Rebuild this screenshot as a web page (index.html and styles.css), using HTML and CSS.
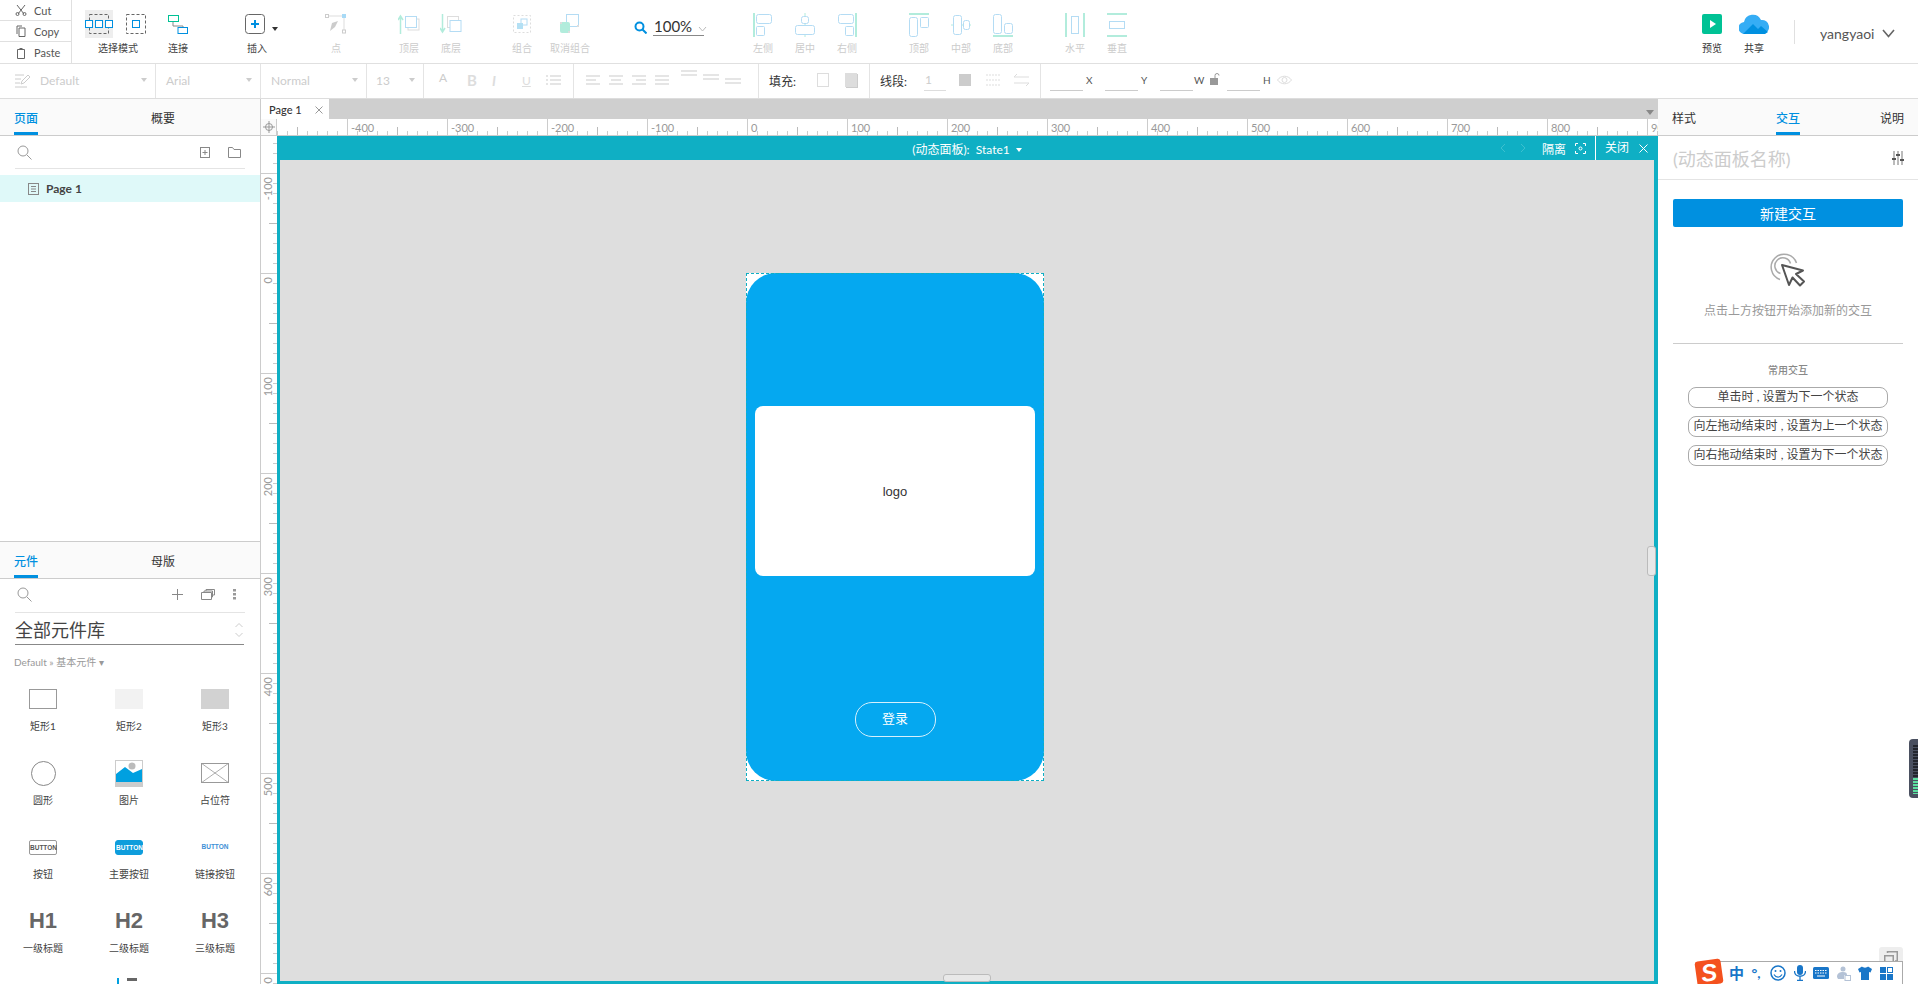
FILE: index.html
```html
<!DOCTYPE html>
<html lang="zh-CN">
<head>
    <meta charset="UTF-8">
    <title>Axure RP</title>
    <link rel="stylesheet" href="styles.css">
</head>
<body>
<div class="app">
    <!-- Top toolbar -->
    <header class="toolbar">
        <div class="clipboard">
            <div class="clip-row"><svg width="12" height="12" viewBox="0 0 12 12"><path d="M2 1l7 9M10 1l-7 9" fill="none" stroke="#666"/><circle cx="2.5" cy="10" r="1.5" fill="none" stroke="#666"/><circle cx="9.5" cy="10" r="1.5" fill="none" stroke="#666"/></svg>Cut</div>
            <div class="clip-row"><svg width="12" height="12" viewBox="0 0 12 12"><path d="M4 3h6v8.500H4zM2 9V1h5" fill="none" stroke="#666"/></svg>Copy</div>
            <div class="clip-row"><svg width="12" height="12" viewBox="0 0 12 12"><path d="M2.500 2.500h7v9h-7z" fill="none" stroke="#666"/><path d="M4.500 1h3v2h-3z" fill="#666"/></svg>Paste</div>
        </div>

        <div class="tool tool-select">
            <div class="select-icons">
                <div class="select-active">
                    <svg width="28" height="28" viewBox="0 0 28 28"><rect x="4.500" y="4.500" width="19" height="19" fill="none" stroke="#666" stroke-dasharray="3 2"/><g fill="#fff" stroke="#0090e0"><rect x="0.500" y="10.500" width="7" height="7"/><rect x="10.500" y="10.500" width="7" height="7"/><rect x="20.500" y="10.500" width="7" height="7"/></g></svg>
                </div>
                <svg width="20" height="20" viewBox="0 0 20 20"><rect x="0.500" y="0.500" width="19" height="19" fill="none" stroke="#666" stroke-dasharray="3 2"/><rect x="6.500" y="6.500" width="7" height="7" fill="#fff" stroke="#0090e0"/></svg>
            </div>
            <span class="tool-label">选择模式</span>
        </div>
        <div class="tool tool-connect">
            <svg width="20" height="20" viewBox="0 0 20 20"><path d="M5 7v5h10v3" fill="none" stroke="#888"/><rect x="0.500" y="1.500" width="10" height="6" fill="#fff" stroke="#00c295"/><rect x="10" y="13.500" width="9.500" height="6" fill="#fff" stroke="#0090e0"/></svg>
            <span class="tool-label">连接</span>
        </div>
        <div class="tool tool-insert">
            <div class="insert-icon">
                <svg width="20" height="20" viewBox="0 0 20 20"><rect x="0.500" y="0.500" width="19" height="19" rx="3" fill="#fff" stroke="#666"/><path d="M10 6v8M6 10h8" stroke="#0090e0" stroke-width="2"/></svg>
                <i class="caret-dark"></i>
            </div>
            <span class="tool-label">插入</span>
        </div>
        <div class="tool tool-point off">
            <svg width="22" height="20" viewBox="0 0 22 20"><path d="M3 2h16v15" fill="none" stroke="#ddd"/><rect x="0.500" y="0.500" width="3" height="3" fill="#fff" stroke="#ccc"/><rect x="17" y="0" width="4" height="4" fill="#a8daf6"/><rect x="17.500" y="16" width="3" height="3" fill="#fff" stroke="#ccc"/><path d="M5 17l2-8 6-2-3 6z" fill="#ccc"/></svg>
            <span class="tool-label">点</span>
        </div>

        <div class="group group-order">
            <div class="tool off">
                <svg width="22" height="20" viewBox="0 0 22 20"><path d="M2.500 20V3M0 6l2.500-4L5 6" fill="none" stroke="#b2ecdc" stroke-width="1.500"/><rect x="10" y="5" width="11" height="11" fill="none" stroke="#ddd"/><rect x="7.500" y="2.500" width="11" height="11" fill="#fff" stroke="#b4dcf4"/></svg>
                <span class="tool-label">顶层</span>
            </div>
            <div class="tool off">
                <svg width="22" height="20" viewBox="0 0 22 20"><path d="M2.500 0v17M0 14l2.500 4L5 14" fill="none" stroke="#b2ecdc" stroke-width="1.500"/><rect x="7.500" y="2.500" width="11" height="11" fill="none" stroke="#ddd"/><rect x="10" y="6.500" width="11" height="11" fill="#fff" stroke="#b4dcf4"/></svg>
                <span class="tool-label">底层</span>
            </div>
        </div>
        <div class="group group-combine">
            <div class="tool off">
                <svg width="20" height="20" viewBox="0 0 20 20"><rect x="1.500" y="1.500" width="17" height="17" fill="none" stroke="#ddd" stroke-dasharray="2 2"/><rect x="9" y="5" width="6" height="6" fill="#fff" stroke="#b4dcf4"/><rect x="5" y="9" width="6" height="6" fill="#b4e0f4"/></svg>
                <span class="tool-label">组合</span>
            </div>
            <div class="tool off tool-wide">
                <svg width="20" height="20" viewBox="0 0 20 20"><rect x="6.500" y="0.500" width="12" height="12" fill="#fff" stroke="#b4dcf4"/><rect x="0" y="8" width="10" height="11" rx="2" fill="#b2ecdc"/><path d="M0 8h2v2H0zM17 11h2v2h-2zM8 17h2v2H8z" fill="#ddd"/></svg>
                <span class="tool-label">取消组合</span>
            </div>
        </div>

        <div class="zoom-box">
            <svg width="13" height="13" viewBox="0 0 13 13"><circle cx="5.500" cy="5.500" r="4" fill="none" stroke="#0090e0" stroke-width="2"/><path d="M8.500 8.500l4 4" stroke="#0090e0" stroke-width="2"/></svg>
            <div class="zoom-value">100%<svg width="9" height="6" viewBox="0 0 9 6"><path d="M1 1l3.500 4L8 1" fill="none" stroke="#bbb"/></svg></div>
        </div>

        <div class="group group-align">
            <div class="tool off">
                <svg width="20" height="24" viewBox="0 0 20 24"><path d="M1 0v24" stroke="#b2ecdc" stroke-width="2"/><rect x="3.500" y="1.500" width="15" height="9" rx="2" fill="none" stroke="#b4dcf4"/><rect x="3.500" y="13.500" width="8" height="9" rx="1" fill="none" stroke="#b4dcf4"/></svg>
                <span class="tool-label">左侧</span>
            </div>
            <div class="tool off">
                <svg width="20" height="24" viewBox="0 0 20 24"><path d="M10 0v24" stroke="#b2ecdc"/><rect x="0.500" y="12.500" width="19" height="9" rx="2" fill="#fff" stroke="#b4dcf4"/><rect x="6.500" y="3.500" width="7" height="7" rx="2" fill="#fff" stroke="#b4dcf4"/></svg>
                <span class="tool-label">居中</span>
            </div>
            <div class="tool off">
                <svg width="20" height="24" viewBox="0 0 20 24"><path d="M19 0v24" stroke="#b2ecdc" stroke-width="2"/><rect x="1.500" y="1.500" width="15" height="9" rx="2" fill="none" stroke="#b4dcf4"/><rect x="8.500" y="13.500" width="8" height="9" rx="1" fill="none" stroke="#b4dcf4"/></svg>
                <span class="tool-label">右侧</span>
            </div>
        </div>
        <div class="group group-valign">
            <div class="tool off">
                <svg width="20" height="24" viewBox="0 0 20 24"><path d="M0 1h20" stroke="#b2ecdc" stroke-width="2"/><rect x="0.500" y="4.500" width="8" height="19" rx="2" fill="none" stroke="#b4dcf4"/><rect x="11.500" y="4.500" width="8" height="10" rx="1" fill="none" stroke="#b4dcf4"/></svg>
                <span class="tool-label">顶部</span>
            </div>
            <div class="tool off">
                <svg width="20" height="24" viewBox="0 0 20 24"><path d="M0 12h20" stroke="#b2ecdc"/><rect x="2.500" y="2.500" width="8" height="19" rx="2" fill="#fff" stroke="#b4dcf4"/><rect x="12.500" y="7.500" width="6" height="9" rx="2" fill="#fff" stroke="#b4dcf4"/></svg>
                <span class="tool-label">中部</span>
            </div>
            <div class="tool off">
                <svg width="20" height="24" viewBox="0 0 20 24"><path d="M0 23h20" stroke="#b2ecdc" stroke-width="2"/><rect x="0.500" y="1.500" width="8" height="19" rx="2" fill="none" stroke="#b4dcf4"/><rect x="11.500" y="10.500" width="8" height="10" rx="2" fill="none" stroke="#b4dcf4"/></svg>
                <span class="tool-label">底部</span>
            </div>
        </div>
        <div class="group group-spread">
            <div class="tool off">
                <svg width="20" height="24" viewBox="0 0 20 24"><path d="M1 0v24M19 0v24" stroke="#b2ecdc" stroke-width="2"/><rect x="6.500" y="3.500" width="7" height="17" fill="none" stroke="#b4dcf4"/></svg>
                <span class="tool-label">水平</span>
            </div>
            <div class="tool off">
                <svg width="20" height="24" viewBox="0 0 20 24"><path d="M0 1h20M0 23h20" stroke="#b2ecdc" stroke-width="2"/><rect x="2.500" y="8.500" width="15" height="7" fill="none" stroke="#b4dcf4"/></svg>
                <span class="tool-label">垂直</span>
            </div>
        </div>

        <div class="group group-right">
            <div class="tool tool-share">
                <svg width="20" height="20" viewBox="0 0 20 20"><rect width="20" height="20" rx="2" fill="#00c295"/><path d="M8 6l6 4-6 4z" fill="#fff"/></svg>
                <span class="tool-label">预览</span>
            </div>
            <div class="tool tool-share">
                <svg width="30" height="20" viewBox="0 0 30 20"><path d="M6 20a6 6 0 0 1-1-12 9 9 0 0 1 17-2 7 7 0 0 1 2 14z" fill="#35adf5"/><path d="M4 20l10-10 5 5 3-3 7 6-3 2z" fill="#0090e0"/></svg>
                <span class="tool-label">共享</span>
            </div>
            <div class="tool-sep"></div>
            <div class="user">yangyaoi<svg width="13" height="9" viewBox="0 0 13 9"><path d="M1 1l5.500 6.500L12 1" fill="none" stroke="#666" stroke-width="1.600"/></svg></div>
        </div>
    </header>

    <!-- Format bar -->
    <div class="formatbar">
        <div class="fmt-cell fmt-style">
            <svg width="15" height="15" viewBox="0 0 15 15"><path d="M0 2h9M0 6h6M0 10h5M0 14h12M6 11l1-3 6-6 2 2-6 6z" fill="none" stroke="#ccc"/></svg>
            <span>Default</span><i class="caret-faint"></i>
        </div>
        <div class="fmt-cell fmt-font"><span>Arial</span><i class="caret-faint"></i></div>
        <div class="fmt-cell fmt-font"><span>Normal</span><i class="caret-faint"></i></div>
        <div class="fmt-cell fmt-size"><span>13</span><i class="caret-faint"></i></div>
        <div class="fmt-cell fmt-text">
            <span class="fmt-a">A</span><b class="fmt-b">B</b><i class="fmt-i">I</i><u class="fmt-u">U</u>
            <svg width="15" height="10" viewBox="0 0 15 10"><path d="M0 1h2M4 1h11M0 5h2M4 5h11M0 9h2M4 9h11" stroke="#ddd" stroke-width="1.500"/></svg>
        </div>
        <div class="fmt-cell fmt-align">
            <svg width="14" height="10" viewBox="0 0 14 10"><path d="M0 1h14M0 5h10M0 9h14" stroke="#ddd" stroke-width="1.500"/></svg>
            <svg width="14" height="10" viewBox="0 0 14 10"><path d="M0 1h14M2 5h10M0 9h14" stroke="#ddd" stroke-width="1.500"/></svg>
            <svg width="14" height="10" viewBox="0 0 14 10"><path d="M0 1h14M4 5h10M0 9h14" stroke="#ddd" stroke-width="1.500"/></svg>
            <svg width="14" height="10" viewBox="0 0 14 10"><path d="M0 1h14M0 5h14M0 9h14" stroke="#ddd" stroke-width="1.500"/></svg>
            <div class="valign-set">
                <svg class="va-top" width="16" height="6" viewBox="0 0 16 6"><path d="M0 1h16M0 5h16" stroke="#ddd" stroke-width="1.500"/></svg>
                <svg class="va-mid" width="16" height="6" viewBox="0 0 16 6"><path d="M0 1h16M0 5h16" stroke="#ddd" stroke-width="1.500"/></svg>
                <svg class="va-bot" width="16" height="6" viewBox="0 0 16 6"><path d="M0 1h16M0 5h16" stroke="#ddd" stroke-width="1.500"/></svg>
            </div>
        </div>
        <div class="fmt-cell fmt-fill">
            <span class="fmt-title">填充:</span>
            <span class="swatch-empty"></span>
            <span class="swatch-shadow"></span>
        </div>
        <div class="fmt-cell fmt-line">
            <span class="fmt-title">线段:</span>
            <span class="line-width">1</span>
            <span class="swatch-line"></span>
            <svg width="15" height="12" viewBox="0 0 15 12"><path d="M0 1h15M0 6h15M0 11h15" stroke="#ddd" stroke-dasharray="2 1"/></svg>
            <svg width="15" height="14" viewBox="0 0 15 14"><path d="M3 1L0 4h15M12 13l3-3H0" fill="none" stroke="#ddd"/></svg>
        </div>
        <div class="fmt-cell fmt-geom">
            <span class="geo-field"></span><span class="geo-label">X</span>
            <span class="geo-field"></span><span class="geo-label">Y</span>
            <span class="geo-field"></span><span class="geo-label">W</span>
            <svg class="geo-lock" width="10" height="12" viewBox="0 0 10 12"><path d="M5 5V2.500a2 2 0 0 1 4 0" fill="none" stroke="#999"/><rect y="5" width="8" height="7" fill="#999"/></svg>
            <span class="geo-field"></span><span class="geo-label">H</span>
            <svg class="geo-eye" width="15" height="10" viewBox="0 0 15 10"><path d="M0.500 5C4 0 11 0 14.500 5 11 10 4 10 0.500 5z" fill="none" stroke="#ddd"/><circle cx="7.500" cy="5" r="2.500" fill="none" stroke="#ddd"/></svg>
        </div>
    </div>

    <div class="main">
        <!-- Left panels -->
        <aside class="left">
            <section class="pages">
                <div class="tabs">
                    <span class="tab active">页面</span>
                    <span class="tab tab-second">概要</span>
                </div>
                <div class="search-row">
                    <svg width="15" height="15" viewBox="0 0 15 15"><circle cx="6" cy="6" r="5" fill="none" stroke="#999"/><path d="M10 10l4.500 4.500" stroke="#999"/></svg>
                    <svg class="page-add" width="10" height="11" viewBox="0 0 10 11"><rect x="0.500" y="0.500" width="9" height="10" fill="none" stroke="#888"/><path d="M5 3v5M2.500 5.500h5" stroke="#888"/></svg>
                    <svg class="page-folder" width="13" height="11" viewBox="0 0 13 11"><path d="M0.500 0.500h4l1.500 2h6.500v8h-12z" fill="none" stroke="#888"/></svg>
                </div>
                <div class="page-row">
                    <svg width="11" height="12" viewBox="0 0 11 12"><rect x="0.500" y="0.500" width="10" height="11" fill="none" stroke="#888"/><path d="M3 3.500h5M3 6h5M3 8.500h5" stroke="#888"/></svg>
                    <span>Page 1</span>
                </div>
            </section>
            <section class="widgets">
                <div class="tabs">
                    <span class="tab active">元件</span>
                    <span class="tab tab-second">母版</span>
                </div>
                <div class="search-row search-row-lib">
                    <svg width="15" height="15" viewBox="0 0 15 15"><circle cx="6" cy="6" r="5" fill="none" stroke="#999"/><path d="M10 10l4.500 4.500" stroke="#999"/></svg>
                    <svg class="lib-add" width="11" height="11" viewBox="0 0 11 11"><path d="M5.500 0v11M0 5.500h11" stroke="#888"/></svg>
                    <svg class="lib-copy" width="14" height="11" viewBox="0 0 14 11"><path d="M0.500 3.500h10v7h-10zM3 3.500V2h8.500v6H10.500M5 2V0.500h8.500V6H11.500" fill="none" stroke="#888"/></svg>
                    <svg class="lib-more" width="3" height="11" viewBox="0 0 3 11"><path d="M0 0h3v2.500H0zM0 4h3v2.500H0zM0 8h3v2.500H0z" fill="#999"/></svg>
                </div>
                <div class="lib-name">
                    <span>全部元件库</span>
                    <svg width="8" height="14" viewBox="0 0 8 14"><path d="M0.500 4L4 0.500 7.500 4M0.500 10L4 13.500 7.500 10" fill="none" stroke="#ccc"/></svg>
                </div>
                <div class="lib-path">Default » 基本元件 ▾</div>
                <div class="widget-grid">
                    <div class="widget"><div class="w-icon"><span class="w-rect"></span></div><span>矩形1</span></div>
                    <div class="widget"><div class="w-icon"><span class="w-rect w-rect2"></span></div><span>矩形2</span></div>
                    <div class="widget"><div class="w-icon"><span class="w-rect w-rect3"></span></div><span>矩形3</span></div>

                    <div class="widget"><div class="w-icon"><span class="w-circle"></span></div><span>圆形</span></div>
                    <div class="widget"><div class="w-icon">
                        <svg width="28" height="27" viewBox="0 0 28 27"><rect x="0.500" y="0.500" width="27" height="26" fill="#fff" stroke="#ccc"/><path d="M1 14l9-7 8 6 9-4v13H1z" fill="#00a0e0"/><rect y="22" width="28" height="5" fill="#ccc"/><circle cx="17" cy="6" r="3.500" fill="#bbb"/></svg>
                    </div><span>图片</span></div>
                    <div class="widget"><div class="w-icon">
                        <svg width="28" height="20" viewBox="0 0 28 20"><rect x="0.500" y="0.500" width="27" height="19" fill="#fff" stroke="#999"/><path d="M0 0l28 20M28 0L0 20" stroke="#999" stroke-width="0.800"/></svg>
                    </div><span>占位符</span></div>

                    <div class="widget"><div class="w-icon"><span class="w-btn">BUTTON</span></div><span>按钮</span></div>
                    <div class="widget"><div class="w-icon"><span class="w-btn w-btn-primary">BUTTON</span></div><span>主要按钮</span></div>
                    <div class="widget"><div class="w-icon"><span class="w-btn w-btn-link">BUTTON</span></div><span>链接按钮</span></div>

                    <div class="widget"><div class="w-icon"><b class="w-h">H1</b></div><span>一级标题</span></div>
                    <div class="widget"><div class="w-icon"><b class="w-h">H2</b></div><span>二级标题</span></div>
                    <div class="widget"><div class="w-icon"><b class="w-h">H3</b></div><span>三级标题</span></div>

                    <div class="widget"></div>
                    <div class="widget"><div class="w-icon w-icon-cut">
                        <svg width="24" height="12" viewBox="0 0 24 12"><rect x="0" y="0" width="2" height="6" fill="#00a0e0"/><rect x="10" y="0" width="10" height="3" fill="#666"/></svg>
                    </div></div>
                </div>
            </section>
        </aside>

        <!-- Canvas -->
        <div class="center">
            <div class="page-tabs">
                <div class="page-tab">Page 1<svg width="8" height="8" viewBox="0 0 8 8"><path d="M0.500 0.500l7 7M7.500 0.500l-7 7" stroke="#999"/></svg></div>
                <i class="tabs-menu"></i>
            </div>
            <div class="ruler-row">
                <div class="ruler-corner"><svg width="12" height="12" viewBox="0 0 12 12"><circle cx="6" cy="6" r="3.500" fill="none" stroke="#999"/><path d="M6 0v12M0 6h12" stroke="#999"/></svg></div>
                <div class="hruler">
                    <span class="hcell hcell-first"></span>
                    <span class="hcell">-400</span><span class="hcell">-300</span><span class="hcell">-200</span><span class="hcell">-100</span>
                    <span class="hcell">0</span><span class="hcell">100</span><span class="hcell">200</span><span class="hcell">300</span>
                    <span class="hcell">400</span><span class="hcell">500</span><span class="hcell">600</span><span class="hcell">700</span>
                    <span class="hcell">800</span><span class="hcell">900</span>
                </div>
            </div>
            <div class="work">
                <div class="vruler">
                    <span class="vcell vcell-first"></span>
                    <span class="vcell"><em>-100</em></span><span class="vcell"><em>0</em></span><span class="vcell"><em>100</em></span>
                    <span class="vcell"><em>200</em></span><span class="vcell"><em>300</em></span><span class="vcell"><em>400</em></span>
                    <span class="vcell"><em>500</em></span><span class="vcell"><em>600</em></span><span class="vcell"><em>700</em></span>
                </div>
                <div class="panel-edit">
                    <div class="panel-head">
                        <div class="panel-title">(动态面板): &nbsp;State1 <i class="caret-white"></i></div>
                        <div class="panel-actions">
                            <svg class="nav-arrow" width="6" height="10" viewBox="0 0 6 10"><path d="M5 1L1 5l4 4" fill="none" stroke="#3cc0cf"/></svg>
                            <svg class="nav-arrow" width="6" height="10" viewBox="0 0 6 10"><path d="M1 1l4 4-4 4" fill="none" stroke="#3cc0cf"/></svg>
                            <span class="act-isolate">隔离</span>
                            <svg class="act-icon" width="11" height="11" viewBox="0 0 11 11"><path d="M0.500 3V0.500H3M8 0.500h2.500V3M10.500 8v2.500H8M3 10.500H0.500V8" fill="none" stroke="#fff"/><circle cx="5.500" cy="5.500" r="1.500" fill="none" stroke="#fff"/></svg>
                            <span class="act-close">关闭</span>
                            <svg class="act-x" width="9" height="9" viewBox="0 0 9 9"><path d="M0.500 0.500l8 8M8.500 0.500l-8 8" stroke="#fff"/></svg>
                        </div>
                    </div>
                    <div class="canvas">
                        <div class="phone-frame">
                            <div class="phone">
                                <div class="logo-card">logo</div>
                                <div class="login-btn">登录</div>
                            </div>
                        </div>
                        <span class="handle-right"></span>
                        <span class="handle-bottom"></span>
                    </div>
                </div>
            </div>
        </div>

        <!-- Right panel -->
        <aside class="right">
            <div class="right-tabs">
                <span class="tab">样式</span>
                <span class="tab active">交互</span>
                <span class="tab">说明</span>
            </div>
            <div class="panel-name">
                <span>(动态面板名称)</span>
                <svg width="12" height="14" viewBox="0 0 12 14"><path d="M2 0v14M6 0v14M10 0v14" stroke="#777"/><path d="M0 8h4M4 4h4M8 9h4" stroke="#555" stroke-width="2"/></svg>
            </div>
            <div class="interact">
                <button class="new-btn">新建交互</button>
                <svg class="cursor-art" width="38" height="38" viewBox="0 0 38 38"><path d="M11 27.500A13 13 0 1 1 27.500 11" fill="none" stroke="#aaa" stroke-width="1.500"/><path d="M11.500 21.500A8 8 0 1 1 21.500 11.500" fill="none" stroke="#aaa" stroke-width="1.500"/><path d="M13 13l7 20 3.500-7.500 7.500 8 4-4-8-7.500 7-3.500z" fill="#fff" stroke="#555" stroke-width="2" stroke-linejoin="round"/></svg>
                <p class="hint">点击上方按钮开始添加新的交互</p>
                <div class="interact-line"></div>
                <h4>常用交互</h4>
                <div class="pill">单击时 , 设置为下一个状态</div>
                <div class="pill">向左拖动结束时 , 设置为上一个状态</div>
                <div class="pill">向右拖动结束时 , 设置为下一个状态</div>
            </div>
        </aside>
    </div>
</div>

<!-- Desktop overlays -->
<div class="volume"></div>
<div class="win-btn"><svg width="14" height="14" viewBox="0 0 14 14"><rect x="0.750" y="4.750" width="8.500" height="8.500" fill="none" stroke="#999" stroke-width="1.500"/><path d="M3.500 2V0.750h9.750V10H11" fill="none" stroke="#999" stroke-width="1.500"/></svg></div>
<div class="ime">
    <span class="ime-logo">S</span>
    <span class="ime-zh">中</span>
    <span class="ime-punc">°,</span>
    <svg width="16" height="16" viewBox="0 0 16 16"><circle cx="8" cy="8" r="7" fill="none" stroke="#1976c8" stroke-width="1.500"/><circle cx="5.500" cy="6" r="1" fill="#1976c8"/><circle cx="10.500" cy="6" r="1" fill="#1976c8"/><path d="M4 9.500c2 3.500 6 3.500 8 0" fill="none" stroke="#1976c8" stroke-width="1.200"/></svg>
    <svg width="12" height="16" viewBox="0 0 12 16"><rect x="3" width="6" height="10" rx="3" fill="#1976c8"/><path d="M0.500 6c0 7 11 7 11 0M6 12v3M3 15.500h6" fill="none" stroke="#1976c8" stroke-width="1.300"/></svg>
    <svg width="16" height="12" viewBox="0 0 16 12"><rect width="16" height="12" rx="1.500" fill="#1976c8"/><path d="M2 3.500h12M2 6h12" stroke="#fff" stroke-dasharray="1.500 1"/><path d="M4 9h8" stroke="#fff"/></svg>
    <svg width="14" height="15" viewBox="0 0 14 15"><circle cx="6" cy="3" r="2.500" fill="#b4c2d6"/><path d="M0 11c0-4 3-5 6-5s4 1 4 3H7v4H1z" fill="#b4c2d6"/><rect x="8" y="9.500" width="5.500" height="5" fill="#fff" stroke="#b4c2d6"/></svg>
    <svg width="14" height="14" viewBox="0 0 14 14"><path d="M4 0.500L0 3l1.500 3.500 1.500-.5V14h8V6l1.500.5L14 3 10 0.500C9 2 5 2 4 0.500z" fill="#1976c8"/></svg>
    <svg width="13" height="13" viewBox="0 0 13 13"><path d="M0 0h6v6H0zM0 7h6v6H0zM7 7h6v6H7z" fill="#1976c8"/><rect x="7.500" y="0.500" width="5" height="5" fill="#fff" stroke="#1976c8"/></svg>
</div>
</body>
</html>
```

FILE: styles.css
```css
* {
    margin: 0;
    padding: 0;
    box-sizing: border-box;
}

body {
    width: 1918px;
    height: 984px;
    overflow: hidden;
    position: relative;
    background-color: #fff;
    color: #333;
    font-family: Lato, "Noto Sans CJK SC", sans-serif;
    font-size: 10px;
}

svg {
    display: block;
    flex: none;
}

.app {
    display: flex;
    flex-direction: column;
    height: 984px;
}

/* Top toolbar */
.toolbar {
    display: flex;
    height: 64px;
    border-bottom: 1px solid #e0e0e0;
    flex: none;
}

.clipboard {
    width: 72px;
    border-right: 1px solid #e0e0e0;
}

.clip-row {
    display: flex;
    align-items: center;
    gap: 7px;
    height: 21px;
    padding-left: 15px;
    border-bottom: 1px solid #e0e0e0;
    color: #555;
    font-size: 11px;
    line-height: 1;
}

.clip-row:last-child {
    border-bottom: 0;
}

.tool {
    position: relative;
    width: 42px;
    display: flex;
    flex-direction: column;
    align-items: center;
    padding-top: 14px;
    flex: none;
}

.tool svg {
    height: 20px;
}

.tool-label {
    position: absolute;
    top: 42px;
    line-height: 12px;
    font-size: 10px;
    white-space: nowrap;
    color: #444;
}

.off .tool-label {
    color: #ccc;
}

.tool-select {
    width: 66px;
    margin-left: 13px;
    padding-top: 10px;
    align-items: flex-start;
}

.tool-select .tool-label {
    left: 13px;
}

.select-icons {
    display: flex;
    align-items: center;
    gap: 13px;
}

.select-active {
    width: 28px;
    height: 28px;
    background-color: #eee;
}

.tool-select svg {
    height: auto;
}

.tool-connect {
    margin-left: 6px;
}

.tool-insert {
    margin-left: 37px;
}

.insert-icon {
    display: flex;
    align-items: flex-end;
    gap: 7px;
    align-self: flex-start;
    margin-left: 9px;
}

.caret-dark {
    width: 0;
    height: 0;
    margin-bottom: 3px;
    border: 3.5px solid transparent;
    border-top: 4px solid #333;
    border-bottom: 0;
}

.tool-insert .tool-label {
    left: 11px;
}

.tool-point {
    margin-left: 37px;
}

.group {
    display: flex;
    flex: none;
}

.group-order {
    margin-left: 31px;
}

.group-combine {
    margin-left: 29px;
}

.tool-wide {
    margin-left: 6px;
}

.zoom-box {
    display: flex;
    align-items: flex-start;
    gap: 6px;
    width: 70px;
    margin-left: 43px;
    padding-top: 21px;
    flex: none;
}

.zoom-value {
    display: flex;
    align-items: center;
    gap: 6px;
    width: 51px;
    height: 18px;
    margin-top: -3px;
    padding-left: 1px;
    border-bottom: 1px solid #888;
    font-size: 15px;
    line-height: 17px;
    color: #333;
}

.zoom-value svg {
    margin-top: 4px;
}

.group-align {
    margin-left: 38px;
}

.group-valign,
.group-spread {
    margin-left: 30px;
}

.group-align .tool,
.group-valign .tool,
.group-spread .tool {
    padding-top: 13px;
}

.group-align .tool svg,
.group-valign .tool svg,
.group-spread .tool svg {
    height: 24px;
}

.group-right {
    margin-left: auto;
    padding-right: 23px;
    position: relative;
}

.tool-share .tool-label {
    color: #333;
}

.tool-sep {
    width: 1px;
    height: 24px;
    margin: 20px 25px 0 19px;
    background-color: #e0e0e0;
}

.user {
    display: flex;
    align-items: center;
    justify-content: space-between;
    width: 75px;
    height: 24px;
    margin-top: 21px;
    font-size: 14px;
    color: #555;
}

/* Format bar */
.formatbar {
    display: flex;
    height: 35px;
    border-bottom: 1px solid #ddd;
    flex: none;
}

.fmt-cell {
    display: flex;
    align-items: center;
    height: 34px;
    padding-bottom: 2px;
    border-right: 1px solid #e4e4e4;
    color: #ccc;
    font-size: 12px;
    flex: none;
}

.fmt-style {
    width: 156px;
    padding-left: 15px;
    gap: 10px;
}

.fmt-font {
    width: 105px;
    padding-left: 10px;
}

.fmt-font + .fmt-font {
    width: 106px;
}

.fmt-size {
    width: 57px;
    padding-left: 9px;
}

.caret-faint {
    width: 0;
    height: 0;
    margin-left: auto;
    margin-right: 8px;
    border: 3.500px solid transparent;
    border-top: 4px solid #ccc;
    border-bottom: 0;
}

.fmt-text {
    width: 150px;
    padding-left: 15px;
}

.fmt-a {
    width: 28px;
    font-size: 12px;
    margin-top: -5px;
}

.fmt-b {
    width: 24px;
    font-size: 15px;
    color: #ddd;
}

.fmt-i {
    width: 31px;
    font-size: 14px;
    color: #ddd;
    font-weight: bold;
    padding-left: 1px;
}

.fmt-u {
    width: 24px;
    font-size: 12px;
    color: #ddd;
    text-decoration: underline;
}

.fmt-align {
    width: 185px;
    padding-left: 12px;
    gap: 9px;
}

.valign-set {
    display: flex;
    gap: 6px;
    height: 20px;
    margin-left: 3px;
}

.va-mid {
    margin-top: 4px;
}

.va-bot {
    margin-top: 8px;
}

.fmt-title {
    width: 30px;
    font-size: 12px;
    color: #333;
    white-space: nowrap;
}

.fmt-fill {
    width: 111px;
    padding-left: 10px;
}

.swatch-empty {
    width: 12px;
    height: 14px;
    margin-left: 18px;
    border: 1px solid #ddd;
}

.swatch-shadow {
    width: 12px;
    height: 14px;
    margin-left: 16px;
    background-color: #ddd;
    box-shadow: 1px 1px 0 #ccc;
}

.fmt-line {
    width: 171px;
    padding-left: 10px;
}

.line-width {
    width: 22px;
    margin-left: 14px;
    height: 20px;
    margin-top: 2px;
    border-bottom: 1px solid #ddd;
    line-height: 17px;
    padding-left: 1px;
}

.swatch-line {
    width: 12px;
    height: 12px;
    margin: 0 15px 0 13px;
    background-color: #ccc;
}

.fmt-line svg:last-child {
    margin-left: 13px;
}

.fmt-geom {
    flex: 1;
    padding-left: 9px;
    border-right: 0;
}

.geo-field {
    width: 33px;
    height: 20px;
    margin-top: 2px;
    border-bottom: 1px solid #ccc;
}

.geo-label {
    width: 22px;
    padding-left: 3px;
    font-size: 10px;
    color: #555;
}

.geo-label:nth-of-type(6) {
    width: 18px;
    padding-left: 1px;
}

.geo-lock {
    margin: -2px 7px 0 -1px;
}

.geo-eye {
    margin-left: -5px;
}

/* Panels */
.main {
    display: flex;
    flex: 1;
    min-height: 0;
}

.left {
    width: 261px;
    border-right: 1px solid #ccc;
    display: flex;
    flex-direction: column;
    flex: none;
}

.pages {
    height: 443px;
    border-bottom: 1px solid #ccc;
    flex: none;
}

.widgets {
    flex: 1;
    overflow: hidden;
}

.tabs {
    display: flex;
    height: 37px;
    padding-left: 14px;
    background-color: #fafafa;
    border-bottom: 1px solid #ccc;
}

.tab {
    height: 36px;
    padding-top: 10px;
    font-size: 12px;
    line-height: 20px;
    color: #333;
}

.tab.active {
    color: #0090e0;
    font-weight: 500;
    border-bottom: 3px solid #0090e0;
}

.tab-second {
    margin-left: 113px;
}

.search-row {
    display: flex;
    align-items: center;
    height: 33px;
    margin: 0 15px;
    padding-left: 2px;
    border-bottom: 1px solid #e4e4e4;
}

.page-add {
    margin-left: auto;
    margin-right: 18px;
}

.page-folder {
    margin-right: 4px;
}

.page-row {
    display: flex;
    align-items: center;
    gap: 7px;
    height: 27px;
    margin-top: 6px;
    padding-left: 28px;
    background-color: #dff9f9;
    font-size: 12px;
    font-weight: bold;
    color: #444;
}

.search-row-lib {
    height: 34px;
    padding-bottom: 2px;
}

.lib-add {
    margin-left: auto;
    margin-right: 18px;
}

.lib-copy {
    margin-right: 18px;
}

.lib-more {
    margin-right: 9px;
}

.lib-name {
    display: flex;
    align-items: center;
    justify-content: space-between;
    height: 32px;
    margin: 0 16px 0 15px;
    padding: 2px 1px 0 0;
    border-bottom: 1px solid #888;
    font-size: 18px;
    line-height: 1;
    color: #444;
}

.lib-path {
    height: 37px;
    padding: 10px 0 0 14px;
    font-size: 10px;
    line-height: 14px;
    color: #999;
}

.widget-grid {
    display: grid;
    grid-template-columns: repeat(3, 86px);
    grid-auto-rows: 74px;
}

.widget {
    display: flex;
    flex-direction: column;
    align-items: center;
    font-size: 10px;
    line-height: 20px;
    color: #444;
}

.w-icon {
    display: flex;
    align-items: center;
    justify-content: center;
    height: 34px;
    flex: none;
}

.w-icon-cut {
    align-items: flex-start;
}

.w-rect {
    width: 28px;
    height: 20px;
    border: 1px solid #999;
}

.w-rect2 {
    background-color: #f2f2f2;
    border: 0;
}

.w-rect3 {
    background-color: #d2d2d2;
    border: 0;
}

.w-circle {
    width: 25px;
    height: 25px;
    border: 1px solid #888;
    border-radius: 50%;
}

.w-btn {
    width: 28px;
    height: 15px;
    border: 1px solid #999;
    border-radius: 2px;
    color: #555;
    font-family: "Liberation Sans", sans-serif;
    font-size: 6.500px;
    font-weight: bold;
    line-height: 13px;
    text-align: center;
}

.w-btn-primary {
    background-color: #0e9ddc;
    border-color: #0e9ddc;
    border-radius: 3px;
    color: #fff;
}

.w-btn-link {
    border: 0;
    color: #3d8fd6;
}

.w-h {
    font-family: "Liberation Sans", sans-serif;
    font-size: 22px;
    line-height: 1;
    color: #666;
}

/* Canvas */
.center {
    width: 1397px;
    display: flex;
    flex-direction: column;
    flex: none;
}

.page-tabs {
    display: flex;
    height: 20px;
    background-color: #cfcfcf;
    position: relative;
    flex: none;
}

.page-tab {
    display: flex;
    align-items: center;
    width: 68px;
    padding-left: 8px;
    gap: 13px;
    background-color: #fff;
    font-size: 11px;
    font-weight: 500;
    color: #333;
}

.page-tab svg {
    margin-top: 2px;
}

.tabs-menu {
    position: absolute;
    right: 4px;
    top: 11px;
    width: 0;
    height: 0;
    border: 4.500px solid transparent;
    border-top: 5px solid #888;
    border-bottom: 0;
}

.ruler-row {
    display: flex;
    height: 17px;
    border-bottom: 1px solid #ccc;
    background-color: #fff;
    flex: none;
}

.ruler-corner {
    display: flex;
    align-items: center;
    justify-content: center;
    width: 16px;
    border-right: 1px solid #ccc;
    background-color: #fafafa;
    flex: none;
}

.hruler {
    display: flex;
    flex: 1;
    overflow: hidden;
}

.hcell {
    width: 100px;
    height: 16px;
    padding-left: 3px;
    flex: none;
    border-left: 1px solid #ccc;
    font-size: 11px;
    line-height: 17px;
    color: #999;
    background-image:
        linear-gradient(#bbb, #bbb),
        repeating-linear-gradient(90deg, transparent 0 9px, #ccc 9px 10px);
    background-size: 1px 8px, 100% 4px;
    background-position: 49px 100%, 0 100%;
    background-repeat: no-repeat;
}

.hcell-first {
    margin-left: -30px;
}

.work {
    display: flex;
    flex: 1;
    min-height: 0;
}

.vruler {
    width: 16px;
    display: flex;
    flex-direction: column;
    overflow: hidden;
    background-color: #fff;
    flex: none;
}

.vcell {
    height: 100px;
    width: 16px;
    flex: none;
    border-top: 1px solid #ccc;
    background-image:
        linear-gradient(#bbb, #bbb),
        repeating-linear-gradient(180deg, transparent 0 9px, #ccc 9px 10px);
    background-size: 8px 1px, 4px 100%;
    background-position: 100% 49px, 100% 0;
    background-repeat: no-repeat;
}

.vcell em {
    display: block;
    font-style: normal;
    font-size: 11px;
    line-height: 14px;
    padding-bottom: 3px;
    color: #999;
    writing-mode: vertical-rl;
    transform: rotate(180deg);
    transform-origin: center;
}

.vcell-first {
    margin-top: -63px;
}

.panel-edit {
    flex: 1;
    display: flex;
    flex-direction: column;
    min-width: 0;
    background-color: #0fafc4;
    padding: 0 4px 3px 3px;
}

.panel-head {
    display: flex;
    align-items: center;
    justify-content: center;
    height: 24px;
    position: relative;
    flex: none;
    color: #fff;
    font-size: 12px;
}

.panel-title {
    white-space: nowrap;
}

.caret-white {
    display: inline-block;
    width: 0;
    height: 0;
    margin-left: 3px;
    vertical-align: middle;
    border: 3.500px solid transparent;
    border-top: 4px solid #fff;
    border-bottom: 0;
}

.panel-actions {
    position: absolute;
    right: -4px;
    top: 0;
    display: flex;
    align-items: center;
    height: 24px;
    font-size: 12px;
}

.nav-arrow {
    margin-right: 14px;
}

.act-isolate {
    margin-left: 2px;
}

.act-icon {
    margin-left: 9px;
}

.act-close {
    height: 24px;
    margin-left: 9px;
    padding-left: 9px;
    line-height: 24px;
    border-left: 1px solid #fff;
}

.act-x {
    margin: 0 10px 0 10px;
}

.canvas {
    flex: 1;
    position: relative;
    background-color: #dedede;
    padding: 113px 0 0 466px;
}

.phone-frame {
    width: 298px;
    height: 508px;
    background-color: #fff;
    outline: 1px dashed #0fafc4;
    outline-offset: -1px;
}

.phone {
    height: 100%;
    display: flex;
    flex-direction: column;
    align-items: center;
    background-color: #05a8f0;
    border-radius: 30px;
}

.logo-card {
    display: flex;
    align-items: center;
    justify-content: center;
    width: 280px;
    height: 170px;
    margin-top: 133px;
    background-color: #fff;
    border-radius: 8px;
    font-family: "Liberation Sans", sans-serif;
    font-size: 13px;
    color: #333;
}

.login-btn {
    width: 81px;
    height: 35px;
    margin-top: 126px;
    border: 1px solid #d6f0fc;
    border-radius: 17px;
    color: #fff;
    font-size: 13px;
    line-height: 30px;
    text-align: center;
}

.handle-right {
    position: absolute;
    right: -2px;
    top: 386px;
    width: 9px;
    height: 30px;
    background-color: #e8e8e8;
    border: 1px solid #bbb;
    border-radius: 3px;
}

.handle-bottom {
    position: absolute;
    left: 663px;
    bottom: -1px;
    width: 48px;
    height: 8px;
    background-color: #e8e8e8;
    border: 1px solid #bbb;
    border-radius: 3px;
}

/* Right panel */
.right {
    flex: 1;
    min-width: 0;
}

.right-tabs {
    display: flex;
    justify-content: space-between;
    height: 37px;
    padding: 0 14px;
    background-color: #fafafa;
    border-bottom: 1px solid #ccc;
}

.panel-name {
    display: flex;
    align-items: center;
    justify-content: space-between;
    height: 44px;
    padding: 0 14px 0 15px;
    border-bottom: 1px solid #e4e4e4;
    font-size: 18px;
    color: #ccc;
}

.interact {
    display: flex;
    flex-direction: column;
    align-items: center;
    padding: 19px 15px 0;
}

.new-btn {
    width: 230px;
    height: 28px;
    background-color: #0090e0;
    border: 0;
    border-radius: 2px;
    color: #fff;
    font-family: inherit;
    font-size: 14px;
}

.cursor-art {
    margin-top: 25px;
}

.hint {
    margin-top: 13px;
    font-size: 12px;
    line-height: 16px;
    color: #999;
}

.interact-line {
    width: 230px;
    height: 1px;
    margin-top: 24px;
    background-color: #ccc;
}

.interact h4 {
    margin-top: 19px;
    font-size: 10px;
    font-weight: 500;
    line-height: 14px;
    color: #888;
}

.pill {
    width: 200px;
    height: 21px;
    margin-top: 8px;
    border: 1px solid #aaa;
    border-radius: 8px;
    font-size: 12px;
    line-height: 18px;
    text-align: center;
    white-space: nowrap;
    color: #444;
}

.interact h4 + .pill {
    margin-top: 10px;
}

/* Desktop overlays */
.volume {
    position: absolute;
    right: 0;
    top: 739px;
    width: 9px;
    height: 59px;
    border-radius: 4px 0 0 4px;
    background-color: #4a5060;
    background-image:
        repeating-linear-gradient(180deg, #4a5060 0 1px, transparent 1px 3px),
        linear-gradient(#23262e 0 68%, #5ce0a0 68%);
    background-size: 5px 50px, 5px 50px;
    background-position: 100% 5px, 100% 5px;
    background-repeat: no-repeat;
}

.win-btn {
    position: absolute;
    left: 1879px;
    top: 947px;
    width: 24px;
    height: 37px;
    padding: 4px 0 0 5px;
    border-radius: 3px;
    background-color: #eee;
}

.ime {
    position: absolute;
    left: 1718px;
    top: 961px;
    display: flex;
    align-items: center;
    gap: 7.500px;
    width: 185px;
    height: 23px;
    padding-left: 11px;
    background-color: #fff;
    border-top: 1px solid #aaa;
    border-right: 1px solid #aaa;
}

.ime-logo {
    position: absolute;
    left: -22px;
    top: -2px;
    width: 26px;
    height: 25px;
    background-color: #f4511e;
    border-radius: 3px;
    color: #fff;
    font-family: "Liberation Sans", sans-serif;
    font-size: 24px;
    font-weight: bold;
    font-style: italic;
    line-height: 25px;
    text-align: center;
    transform: rotate(-8deg);
}

.ime-zh {
    font-size: 15px;
    font-weight: bold;
    line-height: 1;
    color: #1976c8;
}

.ime-punc {
    width: 11px;
    font-size: 14px;
    font-weight: bold;
    line-height: 1;
    color: #1976c8;
}
```
